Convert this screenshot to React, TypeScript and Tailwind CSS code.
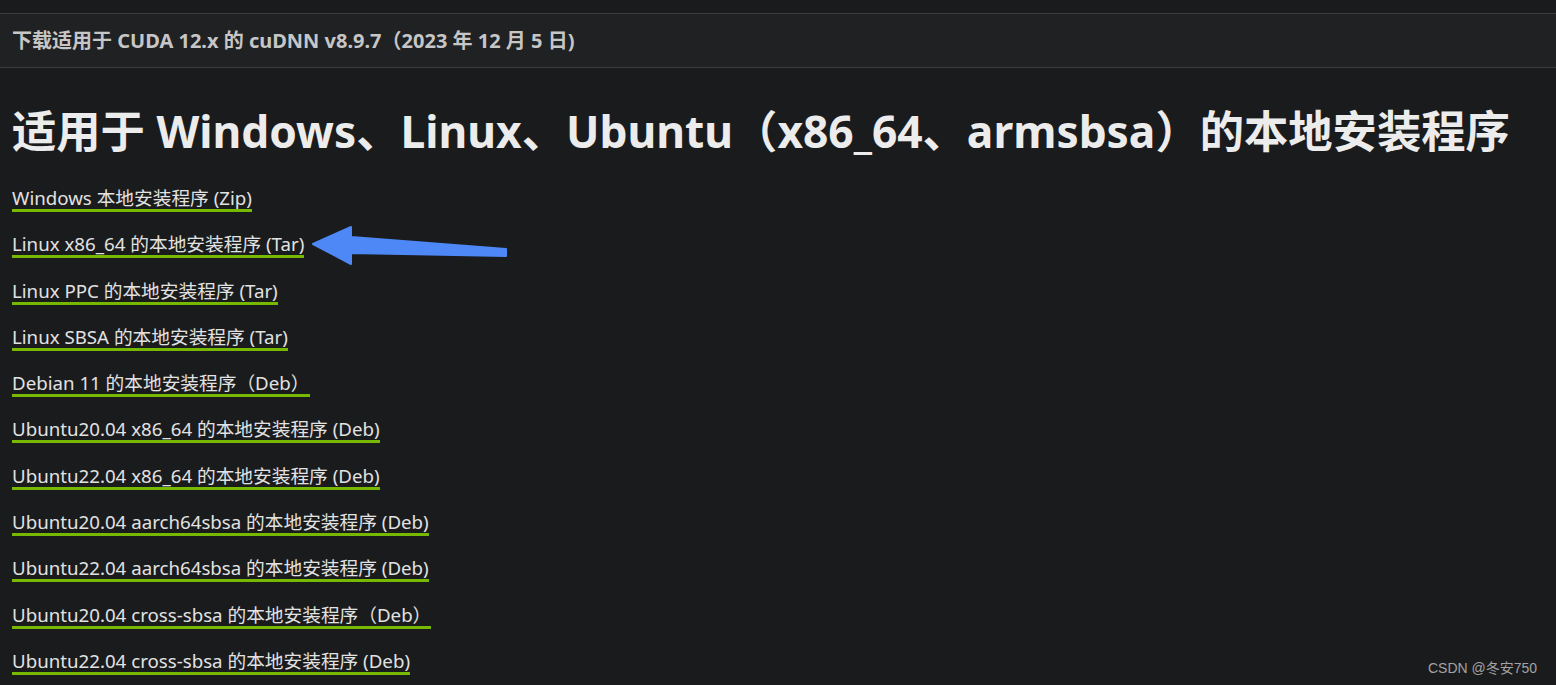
import React from "react";

const links = [
  "Windows 本地安装程序 (Zip)",
  "Linux x86_64 的本地安装程序 (Tar)",
  "Linux PPC 的本地安装程序 (Tar)",
  "Linux SBSA 的本地安装程序 (Tar)",
  "Debian 11 的本地安装程序（Deb）",
  "Ubuntu20.04 x86_64 的本地安装程序 (Deb)",
  "Ubuntu22.04 x86_64 的本地安装程序 (Deb)",
  "Ubuntu20.04 aarch64sbsa 的本地安装程序 (Deb)",
  "Ubuntu22.04 aarch64sbsa 的本地安装程序 (Deb)",
  "Ubuntu20.04 cross-sbsa 的本地安装程序（Deb）",
  "Ubuntu22.04 cross-sbsa 的本地安装程序 (Deb)",
];

const font = {
  fontFamily: '"Noto Sans", "Noto Sans CJK SC", sans-serif',
};

export default function App() {
  return (
    <div className="relative h-[685px] w-[1556px] overflow-hidden bg-[#1a1b1d]" style={font}>
      <div className="h-[13px]" />
      <div className="flex h-[55px] items-center border-y border-[#3b3c3e] bg-[#202123] px-[12px]">
        <span className="text-[20px] font-bold text-[#c6c6c6]">
          下载适用于 CUDA 12.x 的 cuDNN v8.9.7（2023 年 12 月 5 日)
        </span>
      </div>
      <div className="px-[12px]">
        <h1 className="mt-[34px] text-[44.3px] font-bold leading-[58px] text-[#ececec]">
          适用于 Windows、Linux、Ubuntu（x86_64、armsbsa）的本地安装程序
        </h1>
        <ul className="mt-[27px] flex flex-col gap-[21.3px]">
          {links.map((l) => (
            <li key={l}>
              <a className="inline-block border-b-[3px] border-[#76b900] text-[18.7px] leading-[22px] text-[#e2e2e2]">
                {l}
              </a>
            </li>
          ))}
        </ul>
      </div>
      <svg className="absolute left-0 top-0" width="1556" height="685">
        <polygon
          points="313,244 351,227 351,237 506,249 506,256 351,253 351,264"
          fill="#4d88f6"
          stroke="#4d88f6"
          strokeWidth="2"
          strokeLinejoin="round"
        />
      </svg>
      <span
        className="absolute left-[1428px] top-[658px] text-[14px] text-[#a3a3a3]"
        style={{ fontFamily: '"Liberation Sans", "Noto Sans CJK SC", sans-serif' }}
      >
        CSDN @冬安750
      </span>
    </div>
  );
}
